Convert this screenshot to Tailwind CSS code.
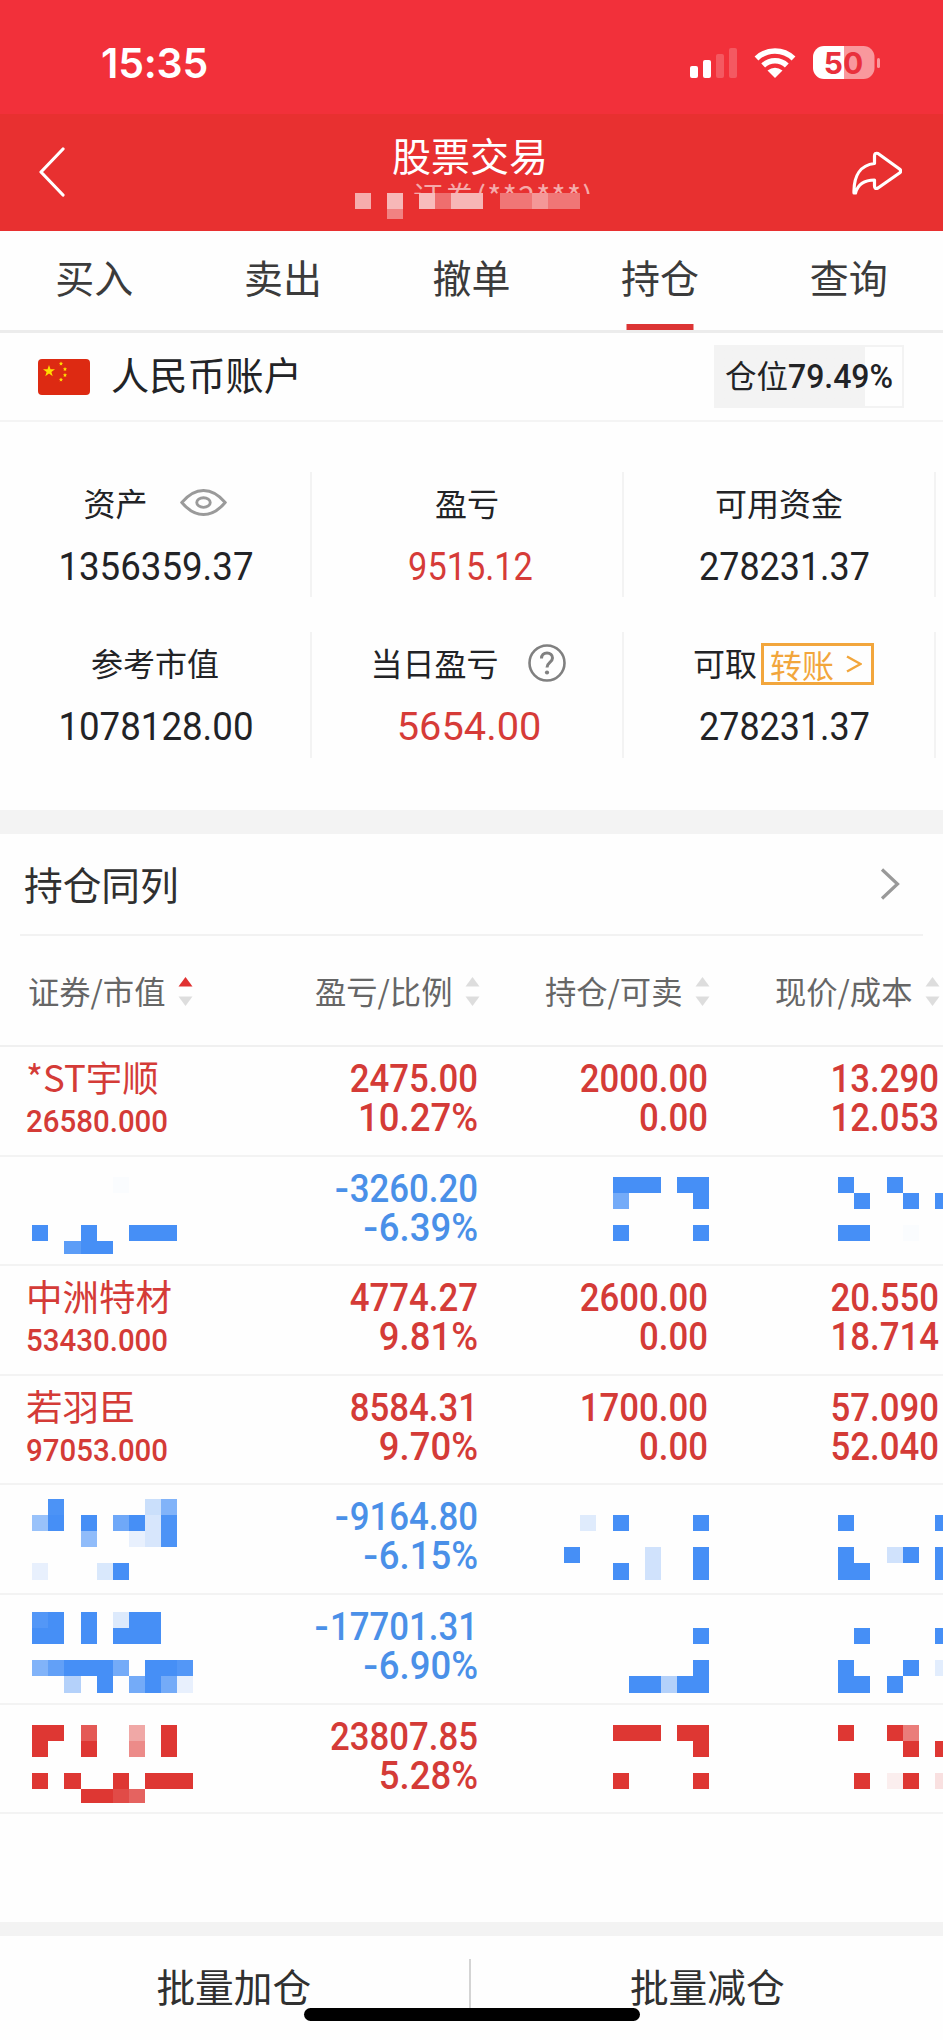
<!DOCTYPE html>
<html lang="zh-CN">

<head>
    <meta charset="UTF-8">
    <meta name="viewport" content="width=device-width, initial-scale=1.0">
    <title>股票交易</title>
    <script src="https://cdn.jsdelivr.net/npm/@tailwindcss/browser@4"></script>
</head>

<body class="bg-white">
    <div class="w-[943px] h-[2040px] flex flex-col overflow-hidden relative bg-[#fefefe] font-['Noto_Sans_CJK_SC',sans-serif] text-[#222326]">
        <!-- status bar -->
        <div class="h-[114px] shrink-0 bg-[#f2303a] flex items-center justify-between pt-3 pl-[101px] pr-[63px] text-white">
            <div class="font-[Inter,sans-serif] font-semibold text-[41px] leading-none tracking-[-0.2px]">15:35</div>
            <svg class="w-[190px] h-[34px]" viewBox="690 46 190 34">
                <g fill="#fff">
                    <rect x="690" y="66" width="8" height="12" rx="2" />
                    <rect x="703" y="60" width="8" height="18" rx="2" />
                    <rect x="716" y="54" width="8" height="24" rx="2" opacity=".2" />
                    <rect x="729" y="48" width="8" height="30" rx="2" opacity=".2" />
                    <path d="M767.5 70.5Q775 65 782.5 70.5L775 78Z" />
                    <rect x="877" y="58" width="3" height="10" rx="1.5" opacity=".5" />
                    <path d="M844 46h19.500a11 11 0 0 1 11 11v11a11 11 0 0 1-11 11H844z" opacity=".5" />
                    <path d="M844 46h-20a11 11 0 0 0-11 11v11a11 11 0 0 0 11 11h20z" />
                </g>
                <g fill="none" stroke="#fff" stroke-width="5.500">
                    <path d="M756.500 58.500a26.500 26.500 0 0 1 37 0" />
                    <path d="M763.200 65.500a17 17 0 0 1 23.600 0" />
                </g>
                <text x="843.500" y="73.500" text-anchor="middle" font-family="Inter" font-weight="700" font-size="30" fill="#e9303c">50</text>
            </svg>
        </div>

        <!-- title bar -->
        <div class="h-[117px] shrink-0 bg-[#e83030] grid grid-cols-[316px_226px_1fr] items-start pl-[39px] pr-[41px] text-white">
            <svg class="w-[27px] h-[52px] mt-8" viewBox="0 0 27 52" fill="none" stroke="#fff" stroke-width="3.200" stroke-linecap="round" stroke-linejoin="round">
                <path d="M24 3L2 26l22 23" />
            </svg>
            <div class="relative">
                <div class="text-[39px] leading-[44px] mt-[18px] text-center whitespace-nowrap pl-1">股票交易</div>
                <div class="h-[17px] mt-[1px] overflow-hidden text-[30px] leading-[36px] tracking-[1.400px] text-white/60 pl-[58px] whitespace-nowrap -mr-8">证券(**2***)</div>
                <svg class="absolute left-0 top-[79px] w-[226px] h-[26px]" viewBox="355 193 226 26" fill="#fff">
                    <rect x="419" y="193" width="64" height="16" fill="#e83030" />
                    <rect x="500" y="193" width="80" height="16" fill="#e83030" />
                    <rect x="355" y="193" width="16" height="16" opacity=".6" />
                    <rect x="387" y="193" width="16" height="16" opacity=".66" />
                    <rect x="387" y="209" width="16" height="10" opacity=".4" />
                    <rect x="419" y="193" width="16" height="16" opacity=".68" />
                    <rect x="435" y="193" width="16" height="16" opacity=".3" />
                    <rect x="451" y="193" width="32" height="16" opacity=".65" />
                    <rect x="500" y="193" width="32" height="16" opacity=".34" />
                    <rect x="532" y="193" width="16" height="16" opacity=".5" />
                    <rect x="548" y="193" width="32" height="16" opacity=".34" />
                </svg>
            </div>
            <svg class="w-[50px] h-[44px] mt-[37px] justify-self-end" viewBox="852 151 50 44" fill="none" stroke="#fff" stroke-width="3.200" stroke-linejoin="round" stroke-linecap="round">
                <path d="M854 193C853.500 175 861 165 874.500 163.500V156Q874.500 152.500 878 153.500L899.500 169Q902 171 899.500 173L878 188Q874.500 189.500 874.500 186V180C865 180 858 184 855.500 193Z" />
            </svg>
        </div>

        <!-- tabs -->
        <div class="h-[102px] shrink-0 border-b-[3px] border-[#ececec] grid grid-cols-5 text-center text-[39px] leading-[90px] text-[#3b3b3b]">
            <div>买入</div>
            <div>卖出</div>
            <div>撤单</div>
            <div class="relative">持仓<span class="absolute left-1/2 -translate-x-1/2 bottom-0 w-[67px] h-[6px] bg-[#dc3434]"></span></div>
            <div>查询</div>
        </div>

        <!-- account -->
        <div class="h-[89px] shrink-0 border-b-2 border-[#f4f4f4] flex items-center pl-[38px] pr-[39px]">
            <svg class="w-[52px] h-9" viewBox="0 0 52 36">
                <rect width="52" height="36" rx="4" fill="#dd2a12" />
                <g fill="#ffde00">
                    <path d="M11 6l1.500 4.200h4.500l-3.600 2.700 1.300 4.300L11 14.600l-3.700 2.600 1.300-4.300L5 10.200h4.500z" />
                    <path d="M23 2.500l.6 1.300 1.400.2-1 1 .2 1.500-1.200-.7-1.300.7.3-1.500-1-1 1.400-.2z" />
                    <path d="M27 8l.6 1.300 1.400.2-1 1 .2 1.500-1.200-.7-1.300.7.3-1.500-1-1 1.400-.2z" />
                    <path d="M27 14l.6 1.300 1.400.2-1 1 .2 1.500-1.200-.7-1.300.7.3-1.500-1-1 1.400-.2z" />
                    <path d="M23 18.500l.6 1.300 1.400.2-1 1 .2 1.500-1.200-.7-1.300.7.3-1.500-1-1 1.400-.2z" />
                </g>
            </svg>
            <div class="ml-[21px] pb-1 text-[38.200px] leading-none">人民币账户</div>
            <div class="ml-auto w-[190px] h-[63px] border-2 border-[#f3f3f3] bg-linear-to-r from-[#f3f3f3] from-80% to-[#fefefe] to-80% flex items-center pl-[9px] text-[31.500px] whitespace-nowrap">
                <span class="pb-1">仓位</span><span class="inline-block origin-left scale-x-[.94] font-[Roboto,sans-serif] font-medium text-[34px]">79.49%</span>
            </div>
        </div>

        <!-- funds -->
        <div class="h-[388px] shrink-0 pt-[50px] grid grid-cols-[312px_312px_312px] grid-rows-[125px_126px] gap-y-[35px] content-start text-center text-[32px]">
            <div class="border-r-2 border-[#f3f3f3] pt-[7px]">
                <div class="h-[46px] flex items-center justify-center gap-8">
                    <span>资产</span>
                    <svg class="w-[47px] h-[27px]" viewBox="0 0 48 28" fill="none" stroke="#9a9a9a" stroke-width="3">
                        <path d="M1.500 14C9 5 16 1.500 24 1.500S39 5 46.500 14C39 23 32 26.500 24 26.500S9 23 1.500 14Z" />
                        <ellipse cx="24" cy="14" rx="7" ry="5" />
                    </svg>
                </div>
                <div class="font-[Roboto,sans-serif] text-[39px] leading-[84px] scale-x-[.94] pl-0.5">1356359.37</div>
            </div>
            <div class="border-r-2 border-[#f3f3f3] pt-[7px]">
                <div class="h-[46px] flex items-center justify-center">盈亏</div>
                <div class="font-[Roboto,sans-serif] text-[39px] leading-[84px] scale-x-[.88] pl-2 text-[#d63b38]">9515.12</div>
            </div>
            <div class="border-r-2 border-[#f3f3f3] pt-[7px]">
                <div class="h-[46px] flex items-center justify-center">可用资金</div>
                <div class="font-[Roboto,sans-serif] text-[39px] leading-[84px] scale-x-[.92] pl-3">278231.37</div>
            </div>
            <div class="border-r-2 border-[#f3f3f3] pt-[7px]">
                <div class="h-[46px] flex items-center justify-center">参考市值</div>
                <div class="font-[Roboto,sans-serif] text-[39px] leading-[84px] scale-x-[.94] pl-0.5">1078128.00</div>
            </div>
            <div class="border-r-2 border-[#f3f3f3] pt-[7px]">
                <div class="h-[46px] flex items-center justify-center gap-[29px] pl-[2px]">
                    <span>当日盈亏</span>
                    <svg class="w-[38px] h-[38px] mt-0.5" viewBox="0 0 38 38" fill="none" stroke="#808080" stroke-width="2.600">
                        <circle cx="19" cy="19" r="17.500" />
                        <path d="M13.500 14.500c0-3.500 2.300-5.500 5.500-5.500s5.500 2 5.500 5c0 4.500-5.500 4.500-5.500 9.500" stroke-width="3" />
                        <circle cx="19" cy="28.500" r="2.100" fill="#808080" stroke="none" />
                    </svg>
                </div>
                <div class="font-[Roboto,sans-serif] text-[39px] leading-[84px] scale-x-[1.02] pl-1 text-[#d63b38]">5654.00</div>
            </div>
            <div class="border-r-2 border-[#f3f3f3] pt-[7px]">
                <div class="h-[46px] flex items-center justify-center gap-[4px] pl-[9px]">
                    <span>可取</span>
                    <span class="w-[113px] h-[42px] mt-1 border-3 border-[#f2a63c] text-[#f2a63c] flex items-center justify-between pl-[6px] pr-[9px]">转账
                        <svg class="w-4 h-[18px]" viewBox="0 0 16 18" fill="none" stroke="#f2a63c" stroke-width="2.500"><path d="M1 1.500L14.500 9L1 16.500" /></svg>
                    </span>
                </div>
                <div class="font-[Roboto,sans-serif] text-[39px] leading-[84px] scale-x-[.92] pl-3">278231.37</div>
            </div>
        </div>

        <div class="h-6 shrink-0 bg-[#f3f3f3]"></div>

        <!-- positions -->
        <div class="h-[102px] shrink-0 mx-5 border-b-2 border-[#f2f2f2] flex items-center justify-between pl-1 pr-[23px] text-[38.700px] text-[#303030]">
            <div class="pb-0.5">持仓同列</div>
            <svg class="w-5 h-[34px]" viewBox="0 0 20 34" fill="none" stroke="#999" stroke-width="3.200"><path d="M2 2.500L17.500 17L2 31.500" /></svg>
        </div>
        <div id="thead" class="h-[111px] shrink-0 border-b-2 border-[#f0f0f0] grid grid-cols-[287px_230px_230px_196px] items-center pl-[28px] text-[31.300px] leading-none text-[#666] whitespace-nowrap"></div>
        <div id="tbody" class="h-[875px] shrink-0"></div>

        <!-- actions -->
        <div class="h-[14px] shrink-0 bg-[#f3f3f3]"></div>
        <div class="h-[104px] shrink-0 grid grid-cols-2 text-center text-[38.700px] leading-[99px] text-[#303030] relative">
            <div class="pr-[4px]">批量加仓</div>
            <div>批量减仓</div>
            <span class="absolute left-[469px] top-[23px] w-[2px] h-[50px] bg-[#d4d4d4]"></span>
            <span class="absolute left-[304px] top-[72px] w-[336px] h-[13px] rounded-full bg-black"></span>
        </div>
    </div>
    <script>
        const heads = ['证券/市值', '盈亏/比例', '持仓/可卖', '现价/成本']
        heads.forEach((h, i) => {
            document.getElementById('thead').insertAdjacentHTML('beforeend',
                '<div class="flex items-center gap-[13px]"><span>' + h + '</span>' +
                '<svg class="w-[15px] h-[29px] mt-0.5 shrink-0" viewBox="0 0 15 29"><path fill="' + (i ? '#ddd' : '#e03131') + '" d="M7.500 0L14.500 9.500H.5z"/><path fill="#ddd" d="M7.500 29L14.500 19.500H.5z"/></svg></div>')
        })

        // masked cells: [column, line, columns, lines, opacity]
        const rows = [
            { c: 'red', name: '*ST宇顺', value: '26580.000', cells: [['2475.00', '10.27%'], ['2000.00', '0.00'], ['13.290', '12.053']] },
            {
                c: 'blue', cells: [['-3260.20', '-6.39%']], top: 20, mask: [
                    [0, 3, 1, 1, 1], [3, 3, 1, 1, 1], [6, 3, 3, 1, 1], [2, 4, 1, .8, .88], [3, 4, 2, .8, 1], [5, 0, 1, 1, .02],
                    [36, 0, 3, 1, 1], [40, 0, 2, 1, 1], [36, 1, 1, 1, .75], [41, 1, 1, 1, 1], [36, 3, 1, 1, 1], [41, 3, 1, 1, 1],
                    [50, 0, 1, 1, 1], [53, 0, 1, 1, 1], [51, 1, 1, 1, 1], [54, 1, 1, 1, 1], [56, 1, 1, 1, 1], [50, 3, 2, 1, 1], [54, 3, 1, 1, .02]]
            },
            { c: 'red', name: '中洲特材', value: '53430.000', cells: [['4774.27', '9.81%'], ['2600.00', '0.00'], ['20.550', '18.714']] },
            { c: 'red', name: '若羽臣', value: '97053.000', cells: [['8584.31', '9.70%'], ['1700.00', '0.00'], ['57.090', '52.040']] },
            {
                c: 'blue', cells: [['-9164.80', '-6.15%']], top: 14, mask: [
                    [1, 0, 1, 1, .97], [7, 0, 1, 1, .28], [8, 0, 1, 1, .68], [0, 1, 1, 1, .55], [1, 1, 1, 1, 1], [3, 1, 1, 1, 1], [5, 1, 1, 1, .78],
                    [6, 1, 1, 1, 1], [7, 1, 1, 2, .21], [8, 1, 1, 2, .97], [3, 2, 1, 1, .6], [6, 2, 1, 1, .12], [0, 4, 1, 1, .12], [4, 4, 1, 1, .2], [5, 4, 1, 1, 1],
                    [34, 1, 1, 1, .17], [36, 1, 1, 1, 1], [41, 1, 1, 1, 1], [33, 3, 1, 1, 1], [38, 3, 1, 2, .25], [41, 3, 1, 2, 1], [36, 4, 1, 1, 1],
                    [50, 1, 1, 1, 1], [56, 1, 1, 1, 1], [50, 3, 1, 2, 1], [51, 4, 1, 1, 1], [53, 3, 1, 1, .25], [54, 3, 1, 1, 1], [56, 3, 1, 2, 1]]
            },
            {
                c: 'blue', cells: [['-17701.31', '-6.90%']], top: 17, mask: [
                    [0, 0, 1, 1, .93], [1, 0, 1, 1, 1], [0, 1, 2, 1, 1], [3, 0, 1, 2, 1], [5, 0, 1, 1, .18], [5, 1, 1, 1, 1], [6, 0, 2, 2, 1],
                    [0, 3, 1, 1, .68], [1, 3, 1, 1, .85], [2, 3, 3, 1, 1], [5, 3, 1, 1, .75], [7, 3, 2, 1, 1], [9, 3, 1, 1, .93],
                    [2, 4, 1, 1, .4], [4, 4, 1, 1, 1], [6, 4, 1, 1, .75], [7, 4, 1, 1, 1], [8, 4, 1, 1, .75], [9, 4, 1, 1, .12],
                    [41, 1, 1, 1, 1], [41, 3, 1, 1, 1], [37, 4, 2, 1, 1], [39, 4, 1, 1, .4], [40, 4, 2, 1, 1],
                    [51, 1, 1, 1, 1], [56, 1, 1, 1, 1], [50, 3, 1, 1, 1], [54, 3, 1, 1, 1], [56, 3, 1, 1, .15], [50, 4, 2, 1, 1], [53, 4, 1, 1, 1]]
            },
            {
                c: 'red', cells: [['23807.85', '5.28%']], top: 20, mask: [
                    [0, 0, 2, 1, 1], [0, 1, 1, 1, 1], [3, 0, 1, 1, .83], [3, 1, 1, 1, 1], [6, 0, 1, 1, .43], [6, 1, 1, 1, .58], [8, 0, 1, 2, 1],
                    [0, 3, 1, 1, 1], [2, 3, 1, 1, 1], [5, 3, 1, 1, 1], [7, 3, 3, 1, 1], [3, 4, 2, .85, 1], [5, 4, 1, .85, .9], [6, 4, 1, .85, .78],
                    [36, 0, 3, 1, 1], [40, 0, 2, 1, 1], [41, 1, 1, 1, 1], [36, 3, 1, 1, 1], [41, 3, 1, 1, 1],
                    [50, 0, 1, 1, 1], [53, 0, 1, 1, 1], [54, 0, 1, 1, .65], [54, 1, 1, 1, 1], [56, 1, 1, 1, 1], [51, 3, 1, 1, 1], [53, 3, 1, 1, .08], [54, 3, 1, 1, 1], [56, 3, 1, 1, .15]]
            },
        ]
        const size = 16.12
        const num = (s) => s.replace('-', '<span class="inline-block origin-right scale-x-[1.2] mr-[1px]">-</span>')
        rows.forEach(r => {
            var p = '<div class="h-[109.600px] border-b-2 border-[#f3f3f3] relative grid grid-cols-[209px_269px_230px_231px] ' + (r.c == 'red' ? 'text-[#d43b37]' : 'text-[#4a90e8]') + '">'
            p += '<div class="pl-[26px] pt-[11px] whitespace-nowrap">'
            if (r.name) {
                p += '<div class="text-[36.500px] leading-[38px]">' + r.name + '</div>' +
                    '<div class="font-[Roboto,sans-serif] font-medium text-[31.500px] leading-[51px] origin-left scale-x-[.935]">' + r.value + '</div>'
            }
            p += '</div>'
            r.cells.forEach(c => {
                p += '<div class="pt-[13px] text-right font-[Roboto,sans-serif] font-medium text-[38px] leading-[39px] whitespace-nowrap">' +
                    '<div class="origin-right scale-x-[.915]">' + num(c[0]) + '</div>' +
                    '<div class="origin-right ' + (c[1].endsWith('%') ? 'scale-x-[.96]' : 'scale-x-[.915]') + '">' + num(c[1]) + '</div></div>'
            })
            if (r.mask) {
                p += '<svg class="absolute left-0 top-0 w-[943px] h-[109px]" viewBox="0 0 943 109" shape-rendering="crispEdges" fill="' + (r.c == 'red' ? '#de3733' : '#468ff6') + '">'
                r.mask.forEach(m => {
                    p += '<rect x="' + (32.2 + m[0] * size) + '" y="' + (r.top + m[1] * size) + '" width="' + m[2] * size + '" height="' + m[3] * size + '" opacity="' + m[4] + '"/>'
                })
                p += '</svg>'
            }
            p += '</div>'
            document.getElementById('tbody').insertAdjacentHTML('beforeend', p)
        })
    </script>
</body>

</html>
